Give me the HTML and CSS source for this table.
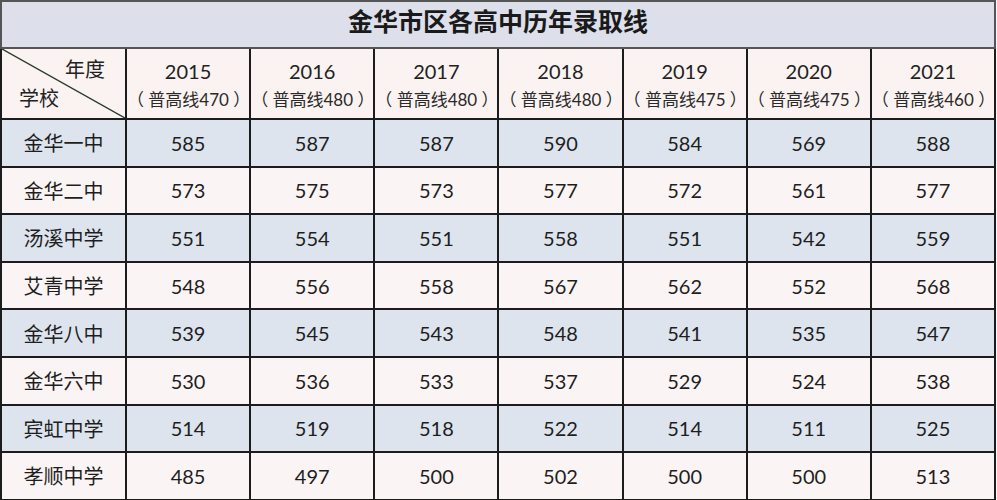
FILE: index.html
```html
<!DOCTYPE html>
<html lang="zh">
<head>
<meta charset="utf-8">
<link rel="stylesheet" href="styles.css">
</head>
<body>
<table class="t">
  <colgroup>
    <col class="c0"><col><col><col><col><col><col><col>
  </colgroup>
  <tr class="title"><th colspan="8"><span class="tt">金华市区各高中历年录取线</span></th></tr>
  <tr class="head">
    <th class="diag">
      <svg class="line" viewBox="0 0 100 100" preserveAspectRatio="none"><line x1="0" y1="0" x2="100" y2="100" stroke="#2a3a2a" stroke-width="1.4" vector-effect="non-scaling-stroke"/></svg>
      <span class="yr">年度</span><span class="sc">学校</span>
    </th>
    <th><div class="y">2015</div><div class="s">（ 普高线470 ）</div></th>
    <th><div class="y">2016</div><div class="s">（ 普高线480 ）</div></th>
    <th><div class="y">2017</div><div class="s">（ 普高线480 ）</div></th>
    <th><div class="y">2018</div><div class="s">（ 普高线480 ）</div></th>
    <th><div class="y">2019</div><div class="s">（ 普高线475 ）</div></th>
    <th><div class="y">2020</div><div class="s">（ 普高线475 ）</div></th>
    <th><div class="y">2021</div><div class="s">（ 普高线460 ）</div></th>
  </tr>
  <tr class="b"><td class="n">金华一中</td><td>585</td><td>587</td><td>587</td><td>590</td><td>584</td><td>569</td><td>588</td></tr>
  <tr class="p"><td class="n">金华二中</td><td>573</td><td>575</td><td>573</td><td>577</td><td>572</td><td>561</td><td>577</td></tr>
  <tr class="b"><td class="n">汤溪中学</td><td>551</td><td>554</td><td>551</td><td>558</td><td>551</td><td>542</td><td>559</td></tr>
  <tr class="p"><td class="n">艾青中学</td><td>548</td><td>556</td><td>558</td><td>567</td><td>562</td><td>552</td><td>568</td></tr>
  <tr class="b"><td class="n">金华八中</td><td>539</td><td>545</td><td>543</td><td>548</td><td>541</td><td>535</td><td>547</td></tr>
  <tr class="p"><td class="n">金华六中</td><td>530</td><td>536</td><td>533</td><td>537</td><td>529</td><td>524</td><td>538</td></tr>
  <tr class="b"><td class="n">宾虹中学</td><td>514</td><td>519</td><td>518</td><td>522</td><td>514</td><td>511</td><td>525</td></tr>
  <tr class="p"><td class="n">孝顺中学</td><td>485</td><td>497</td><td>500</td><td>502</td><td>500</td><td>500</td><td>513</td></tr>
</table>
</body>
</html>
```
FILE: styles.css
```css
html, body {
  margin: 0;
  padding: 0;
  background: #f6f6f8;
}
.t {
  border-collapse: collapse;
  table-layout: fixed;
  width: 996px;
  font-family: Lato, "Noto Sans CJK SC", sans-serif;
  color: #1e1e1e;
}
.t th, .t td {
  border: 2px solid #1c1c1c;
  padding: 0;
  text-align: center;
  font-weight: normal;
}
.c0 { width: 125px; }
.title th {
  height: 45px;
  background: #dde0ea;
  border-color: #555;
  font-family: "Noto Sans CJK SC", sans-serif;
  font-weight: 700;
  font-size: 25px;
  line-height: 30px;
  color: #1a1a1a;
  vertical-align: top;
}
.tt {
  display: block;
  padding-top: 3px;
}
.head th {
  height: 69px;
  background: #fbf3f1;
  vertical-align: top;
}
.y {
  padding-top: 9px;
  font-size: 20px;
  line-height: 26px;
  color: #222;
}
.s {
  margin-top: 3px;
  font-family: Lato, "Noto Sans CJK SC", sans-serif;
  font-size: 17px;
  line-height: 26px;
  color: #2a2a2a;
  white-space: nowrap;
  text-spacing-trim: space-all;
}
.diag {
  position: relative;
}
.line {
  position: absolute;
  left: 0;
  top: 0;
  width: 100%;
  height: 100%;
}
.yr, .sc {
  position: absolute;
  font-family: "Noto Sans CJK SC", sans-serif;
  font-size: 20px;
  line-height: 22px;
  color: #222;
}
.yr { right: 20px; top: 9px; }
.sc { left: 17px; top: 38px; }
.t td {
  height: 45.6px;
  font-size: 20px;
}
.t td.n {
  font-family: "Noto Sans CJK SC", sans-serif;
  font-size: 20px;
}
.b td { background: #dde4ee; }
.p td { background: #fbf4f4; }
```
